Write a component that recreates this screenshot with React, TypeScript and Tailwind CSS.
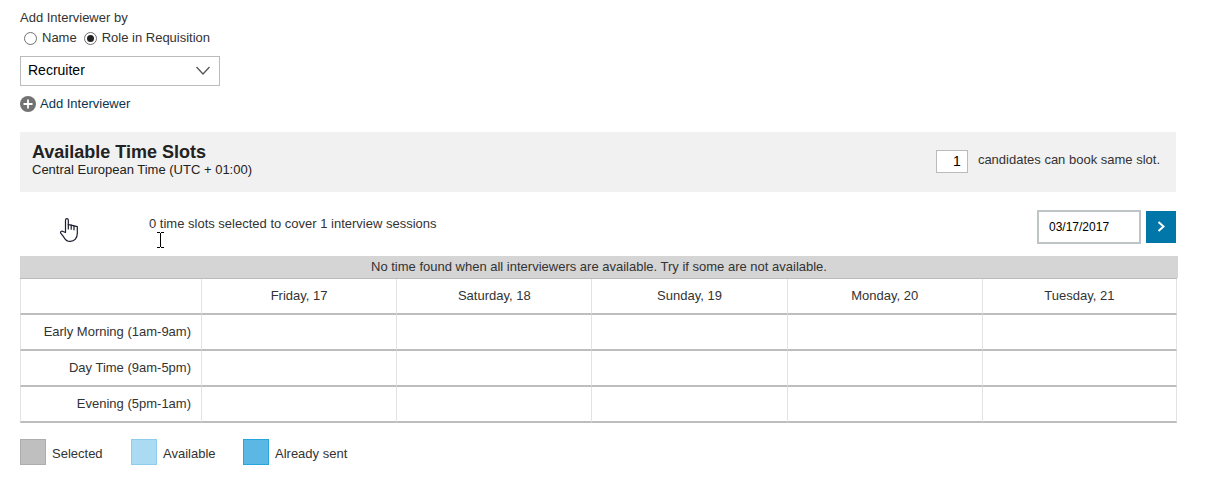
import { useState } from 'react'

const days = ['Friday, 17', 'Saturday, 18', 'Sunday, 19', 'Monday, 20', 'Tuesday, 21']
const periods = ['Early Morning (1am-9am)', 'Day Time (9am-5pm)', 'Evening (5pm-1am)']

const legend = [
  { label: 'Selected', swatch: 'bg-[#bfbfbf] border-[#adadad]', item: 'w-[111px]' },
  { label: 'Available', swatch: 'bg-[#abdbf2] border-[#8ccdec]', item: 'w-28' },
  { label: 'Already sent', swatch: 'bg-[#5bb8e5] border-[#27a3dd]', item: '' },
]

function RadioOption({ label, checked, onChange }: { label: string; checked: boolean; onChange: () => void }) {
  return (
    <label className="flex items-center gap-[5px]">
      <input
        type="radio"
        name="addBy"
        checked={checked}
        onChange={onChange}
        className="w-[13px] h-[13px] appearance-none rounded-full border border-[#707070] bg-white flex items-center justify-center checked:before:content-[''] checked:before:w-[7px] checked:before:h-[7px] checked:before:rounded-full checked:before:bg-[#222222]"
      />
      {label}
    </label>
  )
}

function HandPointer() {
  return (
    <svg className="absolute left-10 top-2 w-[18px] h-6" viewBox="0 0 18 24" fill="#fff" stroke="#1c1c30" strokeWidth="1.2" strokeLinejoin="round" strokeLinecap="round" aria-hidden="true">
      <path d="M5.5 14.5V2.2C5.5.2 8.3.2 8.3 2.2V6.6L11.2 7.2 14 7.8 17.3 8.6V15.5c0 4.6-2.8 7.9-7 7.9-3.4 0-5.3-1.8-6.6-4.5L.9 15.4c-1-1.8.8-3 2.2-1.9z" />
      <path d="M8.3 6.6v4.4M11.2 7.2v4M14 7.8v4" fill="none" />
    </svg>
  )
}

function TextPointer() {
  return (
    <svg className="absolute left-2 top-4 w-[7px] h-4" viewBox="0 0 7 16" fill="none" stroke="#000" shapeRendering="crispEdges" aria-hidden="true">
      <path d="M0 .5h3M4 .5h3M3.5 1v14M0 15.5h3M4 15.5h3" />
    </svg>
  )
}

export default function App() {
  const [addBy, setAddBy] = useState('role')
  const [capacity, setCapacity] = useState('1')
  const [date, setDate] = useState('03/17/2017')

  return (
    <div className="bg-white pl-5 pr-[30px] pt-2.5 pb-5 font-['Liberation_Sans',Arial,sans-serif] text-[13px] leading-4 text-[#333333]">
      {/* Interviewer picker */}
      <fieldset>
        <legend>Add Interviewer by</legend>
        <div className="flex gap-[7px] pl-1 pt-1">
          <RadioOption label="Name" checked={addBy === 'name'} onChange={() => setAddBy('name')} />
          <RadioOption label="Role in Requisition" checked={addBy === 'role'} onChange={() => setAddBy('role')} />
        </div>
      </fieldset>
      <div className="relative mt-2.5 w-[200px]">
        <select aria-label="Role" className="block w-full h-[30px] appearance-none rounded-none border border-[#bbbbbb] bg-white pl-[7px] pb-0.5 text-sm text-black">
          <option>Recruiter</option>
        </select>
        <svg className="absolute right-2 top-2.5 w-4 h-2.5 pointer-events-none" viewBox="0 0 16 10" fill="none" stroke="#555555" strokeWidth="1.3" aria-hidden="true">
          <path d="M.5 1L7 8l6.5-7" />
        </svg>
      </div>
      <a href="#add-interviewer" className="mt-2.5 inline-flex items-center gap-1 text-[#0a344f]">
        <svg className="w-4 h-4" viewBox="0 0 16 16" aria-hidden="true">
          <circle cx="8" cy="8" r="8" fill="#727272" />
          <path d="M8 3.5v9M3.5 8h9" stroke="#fff" strokeWidth="1.8" />
        </svg>
        Add Interviewer
      </a>

      {/* Section header */}
      <div className="mt-4 flex h-[60px] items-center justify-between bg-[#f1f1f1] pb-0.5 pl-3 pr-4">
        <div>
          <h2 className="text-lg leading-5 font-bold text-[#222222]">Available Time Slots</h2>
          <p className="pb-0.5 text-[#222222]">Central European Time (UTC + 01:00)</p>
        </div>
        <label className="flex items-center gap-2.5">
          <input
            value={capacity}
            onChange={(e) => setCapacity(e.target.value)}
            className="w-8 h-[23px] border border-[#bbbbbb] bg-white pr-1.5 text-right text-sm text-black"
          />
          <span className="pb-0.5">candidates can book same slot.</span>
        </label>
      </div>

      {/* Toolbar */}
      <div className="relative mt-[18px] flex h-[34px] items-center justify-between">
        <HandPointer />
        <div className="relative ml-[129px] mb-1.5">
          0 time slots selected to cover 1 interview sessions
          <TextPointer />
        </div>
        <div className="flex items-center gap-[5px]">
          <input
            aria-label="Date"
            value={date}
            onChange={(e) => setDate(e.target.value)}
            className="w-26 h-[34px] border-2 border-[#bfc4c6] bg-white pl-2.5 text-xs text-black"
          />
          <button aria-label="Next days" className="flex w-[30px] h-8 items-center justify-center bg-[#0076a9]">
            <svg className="w-2 h-3" viewBox="0 0 8 12" fill="none" stroke="#fff" strokeWidth="2" aria-hidden="true">
              <path d="M1.5 1L6.5 5.5l-5 4.5" />
            </svg>
          </button>
        </div>
      </div>

      {/* Slots */}
      <div className="-mr-0.5 mt-3">
        <div className="h-[22px] bg-[#d5d5d5] pt-[3px] text-center">
          No time found when all interviewers are available. Try if some are not available.
        </div>
        <div className="mr-px border-t border-[#bbbbbb]">
          <table className="w-full table-fixed border-separate border-spacing-0">
            <thead>
              <tr className="h-9">
                <td className="w-[181px] border-l border-b-2 border-l-[#e3e3e3] border-b-[#bdbdbd]" />
                {days.map((day) => (
                  <th key={day} scope="col" className="border-l border-b-2 border-l-[#e3e3e3] border-b-[#bdbdbd] font-normal last:border-r last:border-r-[#e3e3e3]">
                    {day}
                  </th>
                ))}
              </tr>
            </thead>
            <tbody>
              {periods.map((period) => (
                <tr key={period} className="h-9">
                  <th scope="row" className="border-l border-b-2 border-l-[#e3e3e3] border-b-[#bdbdbd] pr-2.5 text-right font-normal">
                    {period}
                  </th>
                  {days.map((day) => (
                    <td key={day} className="border-l border-b-2 border-l-[#e3e3e3] border-b-[#bdbdbd] last:border-r last:border-r-[#e3e3e3]" />
                  ))}
                </tr>
              ))}
            </tbody>
          </table>
        </div>
      </div>

      {/* Legend */}
      <ul className="mt-4 flex">
        {legend.map(({ label, swatch, item }) => (
          <li key={label} className={`flex items-center gap-1.5 ${item}`}>
            <span className={`w-[26px] h-[26px] border ${swatch}`} />
            <span className="pt-1">{label}</span>
          </li>
        ))}
      </ul>
    </div>
  )
}
